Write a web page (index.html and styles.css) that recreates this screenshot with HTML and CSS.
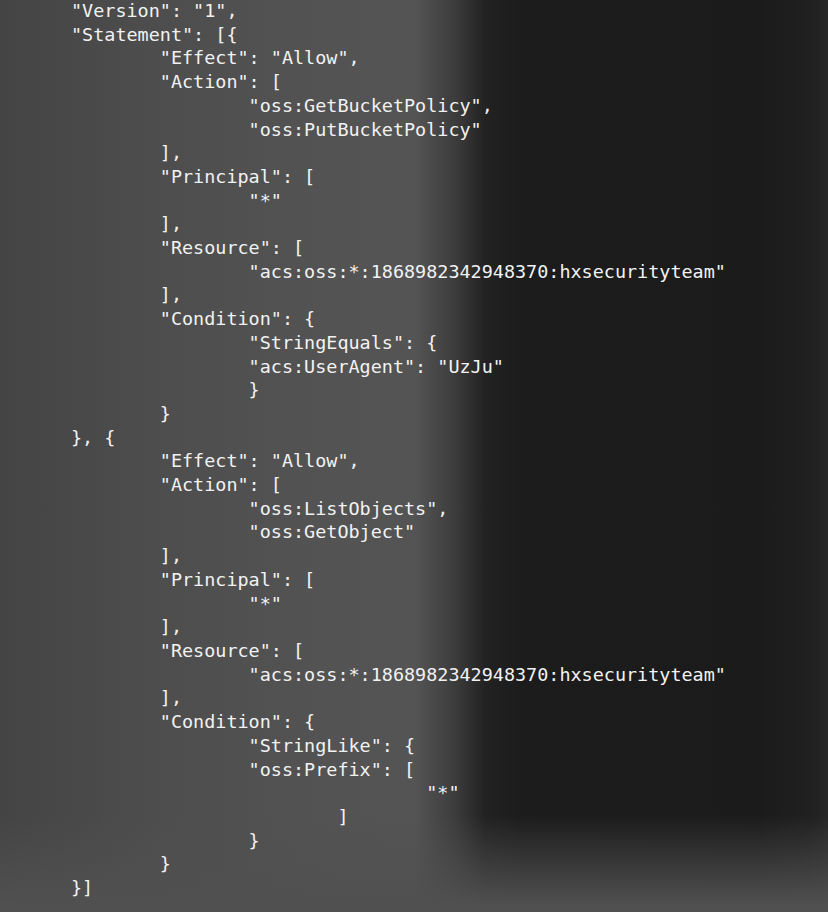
FILE: index.html
```html
<!DOCTYPE html>
<html lang="en">
<head>
<meta charset="utf-8">
<title>Bucket policy</title>
<link rel="stylesheet" href="styles.css">
</head>
<body>
<main class="screen">
<pre class="code">"Version": "1",
"Statement": [{
	"Effect": "Allow",
	"Action": [
		"oss:GetBucketPolicy",
		"oss:PutBucketPolicy"
	],
	"Principal": [
		"*"
	],
	"Resource": [
		"acs:oss:*:1868982342948370:hxsecurityteam"
	],
	"Condition": {
		"StringEquals": {
		"acs:UserAgent": "UzJu"
		}
	}
}, {
	"Effect": "Allow",
	"Action": [
		"oss:ListObjects",
		"oss:GetObject"
	],
	"Principal": [
		"*"
	],
	"Resource": [
		"acs:oss:*:1868982342948370:hxsecurityteam"
	],
	"Condition": {
		"StringLike": {
		"oss:Prefix": [
				"*"
			]
		}
	}
}]</pre>
</main>
</body>
</html>
```
FILE: styles.css
```css
html {
  height: 100%;
  background:
    linear-gradient(to bottom, rgba(80, 80, 80, 0) 815px, rgba(80, 80, 80, 1) 905px),
    linear-gradient(to right, #444444 0px, #4d4d4d 150px, #535353 320px, #545454 415px, #3c3c3c 455px, #222222 485px, #1c1c1c 520px, #1b1b1b 760px, #202020 810px, #262626 828px);
}

body {
  margin: 0;
  height: 100%;
  overflow: hidden;
}

.screen {
  padding: 0 0 0 71px;
}

.code {
  margin: -1px 0 0 0;
  padding: 0;
  font-family: "DejaVu Sans Mono", "Liberation Mono", monospace;
  font-size: 18.45px;
  line-height: 23.7px;
  color: #f2f2f2;
  tab-size: 8;
  -moz-tab-size: 8;
  white-space: pre;
}
```
